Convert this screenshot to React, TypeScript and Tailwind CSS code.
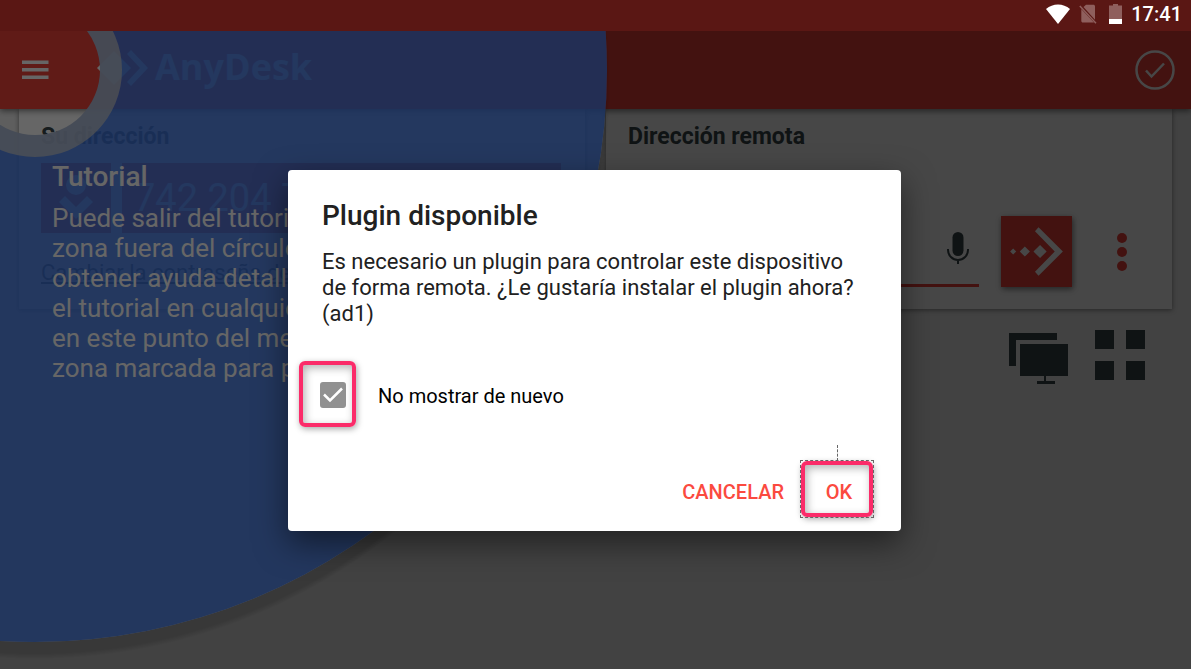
import { useState } from "react";

function StatusBar() {
  return (
    <header className="flex h-[31px] shrink-0 items-center justify-end bg-[#5a1714] pr-[9px] pb-[3px] text-white">
      <svg className="mr-[9px] h-5 w-6" viewBox="0 0 24 20" fill="currentColor" aria-hidden="true">
        <path d="M12 20 0 5C3.500 2 7.500.5 12 .5S20.500 2 24 5Z" />
      </svg>
      <svg className="mr-[12px] h-5 w-[18px]" viewBox="0 0 18 20" aria-hidden="true">
        <path d="M4.500 3 7 .8h7.500c.8 0 1.500.7 1.500 1.500v13.500ZM2.300 5 15 18.500H3.800c-.8 0-1.500-.7-1.500-1.500Z" fill="#8f5f5d" />
        <path d="M.8 2 17 19.200" stroke="#8f5f5d" strokeWidth="1.500" />
      </svg>
      <svg className="mr-[9px] h-5 w-[13px]" viewBox="0 0 13 20" aria-hidden="true">
        <path d="M4 0h5v1.500h4V15H0V1.500h4Z" fill="#8f5f5d" />
        <path d="M0 15h13v5H0Z" fill="white" />
      </svg>
      <time className="text-[20px] leading-6 font-medium">17:41</time>
    </header>
  );
}

function Toolbar() {
  return (
    <div className="relative flex h-[78px] items-center bg-[#ef443b] pr-4 pl-[22px] text-white shadow-[0_2px_6px_rgba(0,0,0,0.5)]">
      <button type="button" aria-label="Menú" className="h-5 w-[27px]">
        <svg className="h-5 w-[27px]" viewBox="0 0 27 20" fill="currentColor">
          <path d="M0 .5h26.500v3.500H0ZM0 8h26.500v3.500H0ZM0 15.500h26.500V19H0Z" />
        </svg>
      </button>
      <svg className="mb-[5px] ml-12 h-9 w-[52px]" viewBox="0 0 52 36" fill="currentColor" aria-hidden="true">
        <path d="m0 18 17-17 17 17-17 17ZM34 0l17 18-17 18-4-4 13-14L30 4Z" />
      </svg>
      <span className="mb-[6px] ml-[6px] font-['Open_Sans',sans-serif] text-[36px] leading-10 font-bold">AnyDesk</span>
      <button type="button" aria-label="Confirmar" className="ml-auto size-10">
        <svg className="size-10" viewBox="0 0 40 40" fill="none" stroke="currentColor" strokeWidth="2.500">
          <circle cx="20" cy="20" r="18.500" />
          <path d="m11 20.500 5.500 6L29 13.500" />
        </svg>
      </button>
    </div>
  );
}

const card = "h-[200px] bg-white pt-3 pl-[22px] shadow-[0_1px_5px_rgba(0,0,0,0.45)]";

function LocalCard() {
  return (
    <section className={card + " pr-6"}>
      <h2 className="text-[23px] leading-8 font-bold">Su dirección</h2>
      <div className="mt-[10px] flex gap-[11px]">
        <div className="flex size-[70px] items-center justify-center bg-[#ef443b] text-white">
          <svg className="size-[70px]" viewBox="0 0 70 70" fill="currentColor" aria-hidden="true">
            <circle cx="35" cy="22" r="10" />
            <path d="m18 39 6-6 11 11 11-11 6 6-17 17Z" />
          </svg>
        </div>
        <div className="flex h-[70px] flex-1 items-center bg-[#ef443b] pl-3 text-[38px] text-white">742 204 7</div>
      </div>
      <a href="#contrasena" className="mt-6 block text-[22px] leading-8 underline">
        Cambiar la contraseña de
      </a>
    </section>
  );
}

function RemoteCard() {
  return (
    <section className={card}>
      <h2 className="text-[23px] leading-8 font-bold">
        <label htmlFor="remote">Dirección remota</label>
      </h2>
      <div className="mt-[63px] flex items-center pr-9">
        <div className="flex h-[70px] flex-1 items-center border-b-[3px] border-[#ef443b]">
          <input id="remote" type="text" className="h-10 min-w-0 flex-1 bg-transparent text-[22px] outline-none" />
          <button type="button" aria-label="Hablar" className="mr-[10px] mb-1 h-[34px] w-[22px]">
            <svg className="h-[34px] w-[22px]" viewBox="0 0 22 34" fill="currentColor">
              <rect x="5.500" y="1" width="11" height="24" rx="5.500" />
              <path d="M1 18v1a10 10 0 0 0 20 0v-1M11 28.500V33" fill="none" stroke="currentColor" strokeWidth="2" />
            </svg>
          </button>
        </div>
        <button type="button" aria-label="Conectar" className="mr-9 ml-[22px] size-[71px] bg-[#ef443b] text-white shadow-[1px_2px_6px_rgba(0,0,0,0.5)]">
          <svg className="size-[71px]" viewBox="0 0 70 70" fill="currentColor">
            <path d="m37 11 24 24-24 24-3.500-4L53 35 33.500 15ZM32 35l6.500-6.500L45 35l-6.500 6.500ZM18.500 35l5-5 5 5-5 5ZM9 35l3-3 3 3-3 3Z" />
          </svg>
        </button>
        <button type="button" aria-label="Más opciones" className="h-10 w-7 text-[#ef443b]">
          <svg className="h-10 w-7" viewBox="0 0 28 40" fill="currentColor">
            <circle cx="14" cy="6" r="5" />
            <circle cx="14" cy="20" r="5" />
            <circle cx="14" cy="34" r="5" />
          </svg>
        </button>
      </div>
    </section>
  );
}

function ViewSwitch() {
  return (
    <div className="flex items-start justify-end gap-[26px] pt-[21px] pr-[46px]">
      <button type="button" aria-label="Sesiones" className="h-[54px] w-[61px]">
        <svg className="h-[54px] w-[61px]" viewBox="0 0 61 54" fill="currentColor">
          <path d="M1 3h48v7H8v26H1ZM12 14h48v32H38v5h9v3H29v-3h7v-5H12Z" />
        </svg>
      </button>
      <button type="button" aria-label="Cuadrícula" className="size-[50px]">
        <svg className="size-[50px]" viewBox="0 0 50 50" fill="currentColor">
          <path d="M0 0h19v19H0ZM31 0h19v19H31ZM0 31h19v19H0ZM31 31h19v19H31Z" />
        </svg>
      </button>
    </div>
  );
}

const tutorialLines = [
  "Puede salir del tutorial",
  "zona fuera del círculo",
  "obtener ayuda detallada",
  "el tutorial en cualquier",
  "en este punto del menú",
  "zona marcada para pulsar",
];

function Tutorial() {
  return (
    <div className="absolute inset-0 overflow-hidden">
      <svg className="absolute inset-0 size-full" aria-hidden="true">
        <defs>
          <mask id="outside">
            <rect width="100%" height="100%" fill="white" />
            <circle cx="35" cy="39" r="572" fill="black" />
          </mask>
          <mask id="spot">
            <rect width="100%" height="100%" fill="white" />
            <circle cx="35" cy="39" r="65" fill="black" />
          </mask>
          <radialGradient id="shade">
            <stop offset="0.990" stopColor="black" stopOpacity="0.15" />
            <stop offset="1" stopColor="black" stopOpacity="0" />
          </radialGradient>
        </defs>
        <g mask="url(#outside)">
          <rect width="100%" height="100%" fill="black" fillOpacity="0.3" />
          <circle cx="35" cy="53" r="575" fill="url(#shade)" />
        </g>
        <g mask="url(#spot)">
          <circle cx="35" cy="39" r="572" fill="#417bea" fillOpacity="0.87" />
          <circle cx="35" cy="39" r="87" fill="#ded9cf" fillOpacity="0.66" />
        </g>
      </svg>
      <div className="relative w-[300px] pt-[130px] pl-[52px] whitespace-nowrap text-white">
        <h2 className="text-[28px] leading-8 font-medium">Tutorial</h2>
        <p className="mt-[10px] text-[26px] leading-[30px]">
          {tutorialLines.map((line) => (
            <span key={line} className="block">{line}</span>
          ))}
        </p>
      </div>
    </div>
  );
}

function PluginDialog() {
  const [hide, setHide] = useState(true);
  return (
    <div className="absolute inset-0 flex items-center justify-center bg-black/60 pr-0.5">
      <div
        role="dialog"
        aria-labelledby="plugin-title"
        className="w-[613px] rounded bg-white pt-7 pr-7 pb-[14px] pl-[34px] text-[#212121] shadow-[0_12px_32px_rgba(0,0,0,0.5)]"
      >
        <h1 id="plugin-title" className="text-[28px] leading-9 font-medium">Plugin disponible</h1>
        <p className="mt-[15px] pr-2 text-[22px] leading-[26px]">
          Es necesario un plugin para controlar este dispositivo de forma remota. ¿Le gustaría instalar el plugin ahora? (ad1)
        </p>
        <label className="mt-[34px] -ml-[23px] flex items-center text-[20px] text-black">
          <span className="flex h-[66px] w-[57px] items-center justify-center rounded-md border-4 border-[#fb2b69] pt-[3px] pl-[11px] shadow-[1px_2px_6px_rgba(0,0,0,0.35),inset_2px_3px_8px_rgba(0,0,0,0.3)]">
            <span className="relative size-[26px]">
              <input
                type="checkbox"
                checked={hide}
                onChange={(e) => setHide(e.target.checked)}
                className="block size-[26px] appearance-none rounded-[3px] border-2 border-[#919191] checked:bg-[#919191]"
              />
              {hide && (
                <svg className="pointer-events-none absolute inset-0 size-[26px]" viewBox="0 0 26 26" fill="none" stroke="white" strokeWidth="2.500" aria-hidden="true">
                  <path d="m4 12.500 6 6L22 6.500" />
                </svg>
              )}
            </span>
          </span>
          <span className="ml-[22px] pt-1">No mostrar de nuevo</span>
        </label>
        <div className="mt-[34px] flex items-center justify-end gap-[17px] text-[20px] font-medium text-[#fb4a3f]">
          <button type="button" className="h-14 pt-[6px]">CANCELAR</button>
          <div className="relative outline-1 outline-dashed outline-[#666]">
            <span className="absolute bottom-full left-1/2 h-4 border-l border-dashed border-[#666]" />
            <button
              type="button"
              className="block h-14 w-[72px] rounded-md border-4 border-[#fb2b69] pt-[6px] pl-1 shadow-[1px_2px_6px_rgba(0,0,0,0.35),inset_2px_3px_8px_rgba(0,0,0,0.3)]"
            >
              OK
            </button>
          </div>
        </div>
      </div>
    </div>
  );
}

export default function App() {
  return (
    <div className="flex min-h-screen flex-col font-[Roboto,sans-serif]">
      <StatusBar />
      <div className="relative flex-1 overflow-hidden bg-[#ececec] text-[#39474b]">
        <Toolbar />
        <main>
          <div className="grid grid-cols-2 gap-[21px] px-[19px]">
            <LocalCard />
            <RemoteCard />
          </div>
          <ViewSwitch />
        </main>
        <Tutorial />
        <PluginDialog />
      </div>
    </div>
  );
}
